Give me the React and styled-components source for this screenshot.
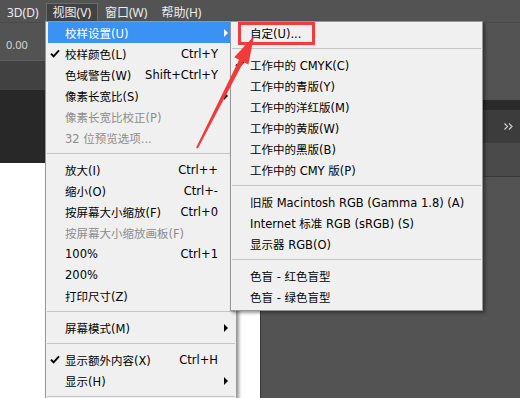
import React from 'react';
import styled, { createGlobalStyle, css } from 'styled-components';

const GlobalStyle = createGlobalStyle`
  html, body {
    margin: 0;
    padding: 0;
    background: #535353;
  }
  body {
    font-family: "DejaVu Sans", "Noto Sans CJK SC", sans-serif;
  }
`;

const Screen = styled.div`
  position: relative;
  width: 520px;
  height: 398px;
  overflow: hidden;
  display: flex;
  flex-direction: column;
  background: #535353;
`;

const MenuBar = styled.div`
  display: flex;
  height: 22px;
  padding-top: 3px;
  box-sizing: border-box;
`;

const TopItem = styled.div`
  height: 19px;
  padding: 0 6px;
  line-height: 18px;
  font-family: "Noto Sans", "Noto Sans CJK SC", sans-serif;
  font-size: 12px;
  color: #ececec;
  border: 1px solid transparent;
  border-bottom: 0;
  box-sizing: border-box;
  white-space: nowrap;
  ${p => p.$open && css`
    background: #424242;
    border-color: #6b6b6b;
  `}
`;

const OptionsBar = styled.div`
  height: 38px;
  display: flex;
  align-items: center;
  padding-left: 6px;
  border-top: 1px solid #4a4a4a;
  box-sizing: border-box;
`;

const Value = styled.span`
  font-family: "Noto Sans", sans-serif;
  font-size: 11px;
  color: #d4d4d4;
  margin-top: 6px;
`;

const Workspace = styled.div`
  flex: 1;
  display: flex;
`;

const DocArea = styled.div`
  width: 261px;
  display: flex;
  flex-direction: column;
  border-right: 1px solid #383838;
  box-sizing: border-box;
`;

const DocTabs = styled.div`
  height: 30px;
  background: #414141;
  border-top: 1px solid #5c5c5c;
  box-sizing: border-box;
`;

const Pasteboard = styled.div`
  height: 73px;
  background: #282828;
`;

const Canvas = styled.div`
  flex: 1;
  background: #ffffff;
`;

const PanelArea = styled.div`
  flex: 1;
  padding-top: 40px;
  display: flex;
  flex-direction: column;
`;

const PanelEdge = styled.div`
  height: 10px;
  background: #2a2a2a;
`;

const PanelTabs = styled.div`
  height: 33px;
  background: #3c3c3c;
  display: flex;
  align-items: center;
  justify-content: flex-end;
  padding-right: 7px;
`;

const PanelBody = styled.div`
  height: 33px;
  background: #4a4a4a;
  border-bottom: 1px solid #383838;
`;

const Menu = styled.div`
  position: absolute;
  top: 21px;
  left: ${p => p.$left}px;
  width: ${p => p.$width}px;
  padding: 0 2px ${p => p.$bottom || 0}px;
  background: #f0f0f0;
  border: 1px solid #979797;
  box-sizing: border-box;
  box-shadow: 2px 2px 3px rgba(0, 0, 0, 0.4);
`;

const Row = styled.div`
  display: grid;
  grid-template-columns: 17px 1fr auto 16px;
  align-items: center;
  height: 21px;
  font-size: 11.5px;
  color: ${p => (p.$disabled ? '#8c8c8c' : '#000000')};
  white-space: nowrap;
  ${p => p.$active && css`
    background: #3a92f4;
    color: #ffffff;
  `}
`;

const Gutter = styled.span`
  display: flex;
  align-items: center;
  padding-left: 2px;
`;

const Label = styled.span`
  overflow: hidden;
`;

const Shortcut = styled.span`
  text-align: right;
`;

const ArrowCell = styled.span`
  display: flex;
  align-items: center;
`;

const Arrow = styled.span`
  display: block;
  width: 0;
  height: 0;
  margin-left: 6px;
  border-left: 4px solid ${p => (p.$light ? '#ffffff' : '#000000')};
  border-top: 4px solid transparent;
  border-bottom: 4px solid transparent;
`;

const Sep = styled.div`
  margin: 5px -1px;
  border-top: 1px solid #c4c4c4;
`;

const Mark = styled.div`
  position: absolute;
  left: 238px;
  top: 22px;
  width: 77px;
  height: 23px;
  border: 3px solid #f53b3b;
  box-sizing: border-box;
`;

const Overlay = styled.svg`
  position: absolute;
  left: 0;
  top: 0;
  pointer-events: none;
`;

const Check = () => (
  <svg width="10" height="9" viewBox="0 0 10 9">
    <path d="M1 4.6 L3.6 7.4 L9 1.4" fill="none" stroke="#000" strokeWidth="1.9" />
  </svg>
);

const Chevrons = () => (
  <svg width="9" height="7" viewBox="0 0 9 7">
    <path d="M0.5 0.5 L3.5 3.5 L0.5 6.5 M5 0.5 L8 3.5 L5 6.5" fill="none" stroke="#cfcfcf" strokeWidth="1.2" />
  </svg>
);

const Item = ({ label, shortcut, checked, sub, disabled, active }) => (
  <Row $disabled={disabled} $active={active}>
    <Gutter>{checked && <Check />}</Gutter>
    <Label>{label}</Label>
    <Shortcut>{shortcut}</Shortcut>
    <ArrowCell>{sub && <Arrow $light={active} />}</ArrowCell>
  </Row>
);

const viewMenu = [
  { label: '校样设置(U)', sub: true, active: true },
  { label: '校样颜色(L)', shortcut: 'Ctrl+Y', checked: true },
  { label: '色域警告(W)', shortcut: 'Shift+Ctrl+Y' },
  { label: '像素长宽比(S)', sub: true },
  { label: '像素长宽比校正(P)', disabled: true },
  { label: '32 位预览选项...', disabled: true },
  'sep',
  { label: '放大(I)', shortcut: 'Ctrl++' },
  { label: '缩小(O)', shortcut: 'Ctrl+-' },
  { label: '按屏幕大小缩放(F)', shortcut: 'Ctrl+0' },
  { label: '按屏幕大小缩放画板(F)', disabled: true },
  { label: '100%', shortcut: 'Ctrl+1' },
  { label: '200%' },
  { label: '打印尺寸(Z)' },
  'sep',
  { label: '屏幕模式(M)', sub: true },
  'sep',
  { label: '显示额外内容(X)', shortcut: 'Ctrl+H', checked: true },
  { label: '显示(H)', sub: true },
  'sep',
];

const proofMenu = [
  { label: '自定(U)...' },
  'sep',
  { label: '工作中的 CMYK(C)', checked: true },
  { label: '工作中的青版(Y)' },
  { label: '工作中的洋红版(M)' },
  { label: '工作中的黄版(W)' },
  { label: '工作中的黑版(B)' },
  { label: '工作中的 CMY 版(P)' },
  'sep',
  { label: '旧版 Macintosh RGB (Gamma 1.8) (A)' },
  { label: 'Internet 标准 RGB (sRGB) (S)' },
  { label: '显示器 RGB(O)' },
  'sep',
  { label: '色盲 - 红色盲型' },
  { label: '色盲 - 绿色盲型' },
];

const renderItems = items =>
  items.map((it, i) => (it === 'sep' ? <Sep key={i} /> : <Item key={i} {...it} />));

const App = () => {
  return (
    <Screen>
      <GlobalStyle />
      <MenuBar>
        <TopItem>3D(D)</TopItem>
        <TopItem $open>视图(V)</TopItem>
        <TopItem>窗口(W)</TopItem>
        <TopItem>帮助(H)</TopItem>
      </MenuBar>
      <OptionsBar>
        <Value>0.00</Value>
      </OptionsBar>
      <Workspace>
        <DocArea>
          <DocTabs />
          <Pasteboard />
          <Canvas />
        </DocArea>
        <PanelArea>
          <PanelEdge />
          <PanelTabs>
            <Chevrons />
          </PanelTabs>
          <PanelBody />
        </PanelArea>
      </Workspace>

      <Menu $left={45} $width={192}>
        {renderItems(viewMenu)}
      </Menu>
      <Menu $left={230} $width={253} $bottom={3}>
        {renderItems(proofMenu)}
      </Menu>

      <Mark />
      <Overlay width="520" height="398" viewBox="0 0 520 398">
        <polygon
          points="196.1,147.5 239.1,59.8 234.2,57.3 254,36 248.4,64.5 243.5,62 197.9,148.5"
          fill="#f23a3a"
        />
      </Overlay>
    </Screen>
  );
};

export default App;
